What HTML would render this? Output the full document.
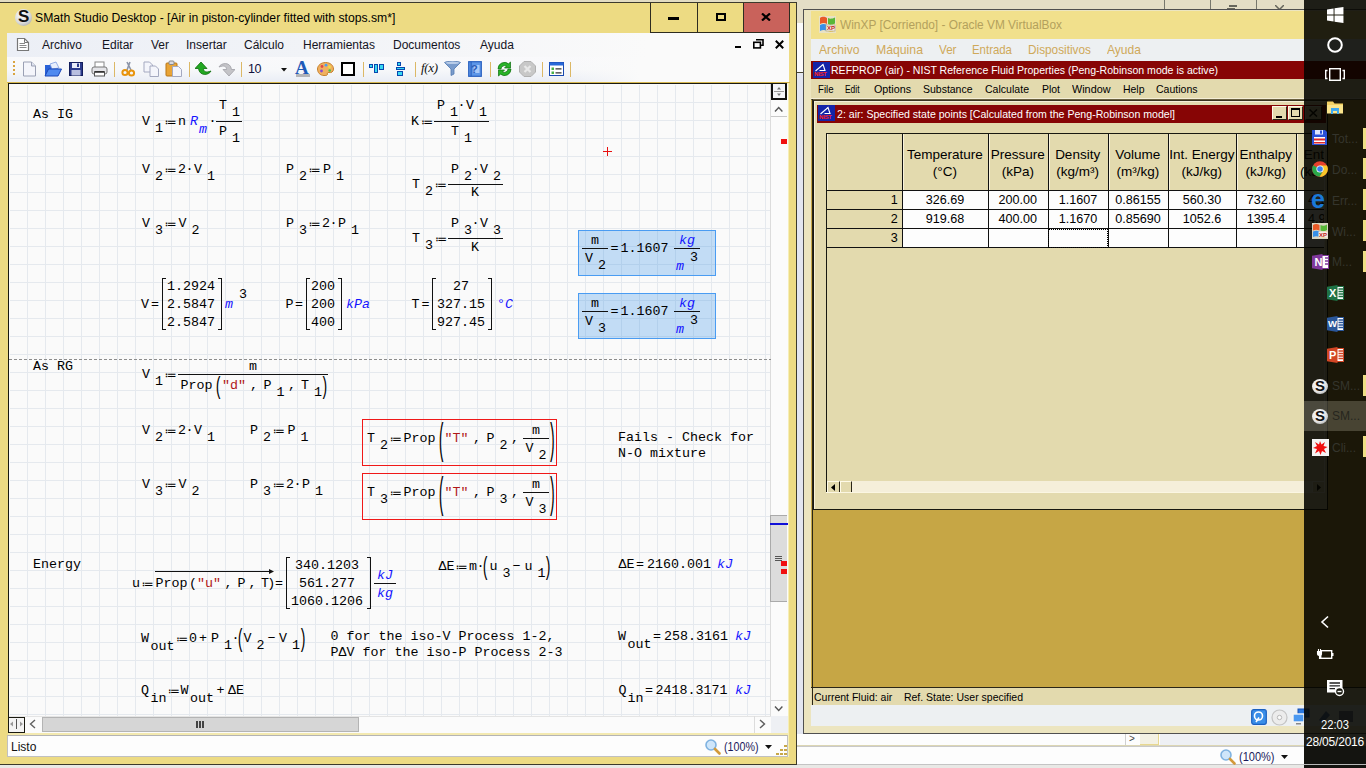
<!DOCTYPE html><html><head><meta charset="utf-8"><title>screen</title><style>
html,body{margin:0;padding:0}
body{width:1366px;height:768px;overflow:hidden;position:relative;background:#e6e2d6;font-family:"Liberation Sans",sans-serif}
div,span,svg{position:absolute;box-sizing:border-box}
span{white-space:pre;line-height:16px}
.m{font:13.33px "Liberation Mono",monospace;line-height:16px;color:#000}
.u{font-style:italic;color:#1414ff}
.s{color:#b01818}
.ui{font:12px "Liberation Sans",sans-serif;line-height:16px;color:#000}
.xp{font:11px "Liberation Sans",sans-serif;line-height:14px;color:#000}
.ar{font:13.5px "Liberation Sans",sans-serif;line-height:16px;color:#000}
.op{font:13.33px "DejaVu Sans",sans-serif;line-height:16px}
.tb{font:12px "Liberation Sans",sans-serif;line-height:16px;color:#35352d}
</style></head><body>
<div style="left:0px;top:0px;width:1366px;height:3px;background:#e2dcc2;"></div>
<div style="left:797px;top:0px;width:570px;height:10px;background:#e4dec6;"></div>
<div style="left:1164px;top:0px;width:1px;height:10px;background:#77776c;"></div>
<div style="left:1210px;top:0px;width:1px;height:10px;background:#77776c;"></div>
<div style="left:1256px;top:0px;width:1px;height:10px;background:#77776c;"></div>
<div style="left:1229px;top:5px;width:8px;height:2px;background:#66665c;"></div>
<div style="left:1227px;top:8px;width:8px;height:1px;background:#66665c;"></div>
<svg style="left:1275px;top:5px" width="9" height="5"><path d="M0 0L4.500 4.500L9 0" fill="none" stroke="#66665c" stroke-width="1.500"/></svg>
<div style="left:797px;top:0px;width:6px;height:23px;background:#e4dec6;"></div>
<div style="left:797px;top:23px;width:6px;height:50px;background:#fbfbfb;"></div>
<div style="left:797px;top:72px;width:6px;height:1px;background:#4a4630;"></div>
<div style="left:797px;top:73px;width:6px;height:661px;background:#e3e6f0;"></div>
<div style="left:797px;top:734px;width:507px;height:11px;background:#fdfdfd;"></div>
<div style="left:1125px;top:734px;width:15px;height:11px;background:#fdfdfd;border-left:1px solid #d0d0d0;"></div>
<div style="left:1140px;top:734px;width:19px;height:11px;background:#f3f1e4;border-right:1px solid #e8d890;border-bottom:1px solid #e8d890;"></div>
<div style="left:1160px;top:734px;width:144px;height:11px;background:#eef0f4;"></div>
<div style="left:797px;top:745px;width:507px;height:1px;background:#dcd6b4;"></div>
<div style="left:797px;top:746px;width:507px;height:19px;background:#fdfdfd;border-top:1px solid #c9c9c9;border-bottom:1px solid #c4c4c4;"></div>
<div style="left:0px;top:765px;width:1366px;height:3px;background:#e9e9e6;"></div>
<span class="ui" style="left:1129px;top:731px;font-size:10px;color:#444;">&gt;</span>
<svg style="left:1219px;top:748px" width="18" height="18" viewBox="0 0 18 18"><circle cx="7" cy="7" r="5" fill="#cfe6fa" stroke="#7fb2e0" stroke-width="1.6"/><line x1="11" y1="11" x2="15.5" y2="15.5" stroke="#d39a3a" stroke-width="2.6" stroke-linecap="round"/></svg>
<span class="ui" style="left:1239px;top:749px;font-size:12px;transform:scaleX(0.9178);transform-origin:0 0;color:#1a1a5a;">(100%)</span>
<svg style="left:1281px;top:755px" width="8" height="5"><path d="M0 0H7L3.5 4Z" fill="#111"/></svg>
<div style="left:-1px;top:2px;width:798px;height:763px;background:#eddb83;border:1px solid #3c3a2c;"></div>
<div style="left:15px;top:9px;width:17px;height:17px;border-radius:50%;background:radial-gradient(circle at 40% 35%,#ffffff 0%,#d9d9d9 55%,#8f8f8f 100%);"></div>
<span class="ui" style="left:18px;top:7px;font:bold 17px 'Liberation Sans',sans-serif;line-height:20px;color:#111;">S</span>
<span class="ui" style="left:35px;top:10px;font-size:12.2px;color:#000;">SMath Studio Desktop - [Air in piston-cylinder fitted with stops.sm*]</span>
<div style="left:744px;top:3px;width:46px;height:29px;background:#c9625b;"></div>
<div style="left:650px;top:3px;width:1px;height:30px;background:#2e2c20;"></div>
<div style="left:697px;top:3px;width:1px;height:30px;background:#2e2c20;"></div>
<div style="left:743px;top:3px;width:1px;height:30px;background:#2e2c20;"></div>
<div style="left:789px;top:3px;width:1px;height:30px;background:#2e2c20;"></div>
<div style="left:650px;top:32px;width:140px;height:1px;background:#2e2c20;"></div>
<div style="left:668px;top:17px;width:11px;height:3px;background:#000;"></div>
<div style="left:716px;top:13px;width:10px;height:8px;border:2px solid #000;"></div>
<svg style="left:761px;top:13px" width="10" height="8" viewBox="0 0 10 8"><path d="M1 0.5L9 7.5M9 0.5L1 7.5" stroke="#000" stroke-width="2.2"/></svg>
<div style="left:7px;top:33px;width:782px;height:24px;background:linear-gradient(90deg,#eceff6 0,#f1f3f7 300px,#fafafa 640px);"></div>
<div style="left:7px;top:57px;width:782px;height:25px;background:linear-gradient(180deg,#f9f9fb 0,#f7f8fa 50%,#e9edf5 100%);"></div>
<div style="left:560px;top:57px;width:229px;height:25px;background:linear-gradient(90deg,rgba(250,250,250,0),#fafafa 80px);"></div>
<svg style="left:16px;top:37px" width="14" height="15" viewBox="0 0 14 15"><path d="M1.5 1.5H8.5L12.5 5.5V13.5H1.5Z" fill="#fff" stroke="#777" stroke-width="1.2"/><path d="M8.5 1.5V5.5H12.5" fill="none" stroke="#777" stroke-width="1"/><path d="M3.5 6.5H9M3.5 8.5H10.5M3.5 10.5H10.5" stroke="#888" stroke-width="1"/></svg>
<span class="ui" style="left:42px;top:37px;color:#14141e;">Archivo</span>
<span class="ui" style="left:102px;top:37px;color:#14141e;">Editar</span>
<span class="ui" style="left:151px;top:37px;color:#14141e;">Ver</span>
<span class="ui" style="left:186px;top:37px;color:#14141e;">Insertar</span>
<span class="ui" style="left:244px;top:37px;color:#14141e;">Cálculo</span>
<span class="ui" style="left:303px;top:37px;color:#14141e;">Herramientas</span>
<span class="ui" style="left:393px;top:37px;color:#14141e;">Documentos</span>
<span class="ui" style="left:480px;top:37px;color:#14141e;">Ayuda</span>
<div style="left:735px;top:46px;width:6px;height:2px;background:#000;"></div>
<svg style="left:753px;top:39px" width="11" height="10" viewBox="0 0 11 10"><path d="M3 0.8H10V6.2H8" fill="none" stroke="#000" stroke-width="1.6"/><rect x="0.8" y="3.3" width="6.6" height="5.6" fill="none" stroke="#000" stroke-width="1.6"/></svg>
<svg style="left:775px;top:40px" width="9" height="9" viewBox="0 0 9 9"><path d="M0.8 0.8L8.2 8.2M8.2 0.8L0.8 8.2" stroke="#000" stroke-width="2"/></svg>
<div style="left:13px;top:61px;width:2px;height:2px;background:#d9a441;"></div>
<div style="left:13px;top:65px;width:2px;height:2px;background:#d9a441;"></div>
<div style="left:13px;top:69px;width:2px;height:2px;background:#d9a441;"></div>
<div style="left:13px;top:73px;width:2px;height:2px;background:#d9a441;"></div>
<div style="left:114px;top:62px;width:1px;height:15px;background:#dcb866;"></div>
<div style="left:189px;top:62px;width:1px;height:15px;background:#dcb866;"></div>
<div style="left:241px;top:62px;width:1px;height:15px;background:#dcb866;"></div>
<div style="left:363px;top:62px;width:1px;height:15px;background:#dcb866;"></div>
<div style="left:415px;top:62px;width:1px;height:15px;background:#dcb866;"></div>
<div style="left:490px;top:62px;width:1px;height:15px;background:#dcb866;"></div>
<div style="left:542px;top:62px;width:1px;height:15px;background:#dcb866;"></div>
<div style="left:570px;top:62px;width:1px;height:15px;background:#dcb866;"></div>
<svg style="left:22px;top:61px" width="15" height="16" viewBox="0 0 15 16"><path d="M1.5 1H9.5L13.5 5V15H1.5Z" fill="#f4f5fb" stroke="#9aa0b4" stroke-width="1"/><path d="M9.5 1V5H13.5" fill="#dfe3f0" stroke="#9aa0b4" stroke-width="1"/></svg>
<svg style="left:44px;top:61px" width="18" height="16" viewBox="0 0 18 16"><path d="M1 4H7L8 6H14V15H1Z" fill="#2a62d8"/><path d="M6 3L12 1L15 7L8 8Z" fill="#e8eefc" stroke="#7c9be0" stroke-width=".8"/><path d="M1 15L4.5 8H17.5L14 15Z" fill="#4f8af0" stroke="#1a46b8" stroke-width="1"/></svg>
<svg style="left:69px;top:62px" width="14" height="14" viewBox="0 0 14 14"><rect x=".5" y=".5" width="13" height="13" fill="#2b3a8c" stroke="#141e5c"/><rect x="3" y="1" width="8" height="5" fill="#e9ecf8"/><rect x="8" y="1.5" width="2" height="3.5" fill="#2b3a8c"/><rect x="2.5" y="8" width="9" height="5.5" fill="#b8bfe0"/></svg>
<svg style="left:91px;top:61px" width="17" height="16" viewBox="0 0 17 16"><rect x="4" y="1" width="9" height="6" fill="#fff" stroke="#888"/><rect x="1" y="6" width="15" height="7" rx="2" fill="#e4e4e8" stroke="#777"/><rect x="3.5" y="11" width="10" height="4" fill="#fff" stroke="#555"/><rect x="3.5" y="10" width="10" height="1.6" fill="#333"/></svg>
<svg style="left:121px;top:61px" width="15" height="16" viewBox="0 0 15 16"><path d="M9 1L6 9M6 1L10 9" stroke="#8d95a8" stroke-width="1.6" fill="none"/><circle cx="4" cy="11.5" r="2.6" fill="none" stroke="#e8940e" stroke-width="2"/><circle cx="10.5" cy="12" r="2.6" fill="none" stroke="#e8940e" stroke-width="2"/></svg>
<svg style="left:143px;top:61px" width="17" height="16" viewBox="0 0 17 16"><path d="M1 1H6.5L9.5 4V11H1Z" fill="#f4f5fb" stroke="#a4a9c0"/><path d="M7 5H12.5L15.5 8V15.5H7Z" fill="#f4f5fb" stroke="#a4a9c0"/></svg>
<svg style="left:165px;top:60px" width="18" height="17" viewBox="0 0 18 17"><rect x="1" y="3" width="11" height="13" rx="1" fill="#e9a436" stroke="#b97716"/><rect x="4" y="1" width="5" height="3.5" rx="1" fill="#d8d8e0" stroke="#888"/><path d="M7.5 6.5H13.5L16.5 9.5V16.5H7.5Z" fill="#f4f5fb" stroke="#a4a9c0"/></svg>
<svg style="left:195px;top:62px" width="17" height="14" viewBox="0 0 17 14"><path d="M6 0L12 6.5H8.5C8.5 9.5 10.5 11 16 9C14 13.5 4.5 14.5 3.5 6.5H0Z" fill="#22a822" stroke="#0c6c0c" stroke-width=".8"/></svg>
<svg style="left:218px;top:62px" width="17" height="14" viewBox="0 0 17 14"><path d="M11 14L5 7.5H8.5C8.5 4.5 6.5 3 1 5C3 0.5 12.500 -0.5 13.5 7.5H17Z" fill="#c4c4c8" stroke="#a0a0a6" stroke-width=".8"/></svg>
<span class="ui" style="left:248px;top:61px;color:#10103c;font-size:12.5px;letter-spacing:-0.4px">10</span>
<svg style="left:281px;top:68px" width="6" height="4" viewBox="0 0 6 4"><path d="M0 0H6L3 3.5Z" fill="#111"/></svg>
<span style="left:295px;top:58px;font:bold 19px 'Liberation Serif',serif;line-height:20px;color:#1e5ab8;">A</span>
<div style="left:296px;top:74px;width:14px;height:3px;background:#b4b4b8;"></div>
<svg style="left:317px;top:62px" width="17" height="14" viewBox="0 0 17 14"><path d="M8.500 .5C13.500 .5 16.500 3.500 16.500 7C16.500 10 14 11 12 10.500C10.500 10.100 10 11.500 10.500 12.500C10 13.500 8.500 13.500 7 13.500C3 13.500 .5 10.500 .5 7C.5 3.500 4 .5 8.500 .5Z" fill="#f0b060" stroke="#c07820" stroke-width=".9"/><circle cx="5" cy="4.500" r="1.400" fill="#e04848"/><circle cx="9" cy="3.200" r="1.400" fill="#4aa0f0"/><circle cx="12.500" cy="5" r="1.400" fill="#f0e040"/><circle cx="4.500" cy="9" r="1.400" fill="#8848d0"/><circle cx="12.700" cy="8.500" r="1.300" fill="#48c048"/></svg>
<div style="left:341px;top:62px;width:14px;height:14px;background:#fff;border:2px solid #000;"></div>
<svg style="left:369px;top:64px" width="15" height="9" viewBox="0 0 15 9"><rect x=".5" y=".5" width="3" height="3" fill="#38d8f0" stroke="#0848b0"/><rect x="5.500" y=".5" width="3" height="8" fill="#38d8f0" stroke="#0848b0"/><rect x="10.500" y=".5" width="4" height="5" fill="#38d8f0" stroke="#0848b0"/></svg>
<svg style="left:396px;top:62px" width="9" height="14" viewBox="0 0 9 14"><rect x="1.500" y=".5" width="3" height="3" fill="#38d8f0" stroke="#0848b0"/><rect x=".5" y="5.500" width="8" height="2" fill="#38d8f0" stroke="#0848b0"/><rect x="1.500" y="9.500" width="5" height="4" fill="#38d8f0" stroke="#0848b0"/></svg>
<span style="left:421px;top:60px;font:italic 13px 'Liberation Serif',serif;line-height:16px;color:#111;letter-spacing:-0.3px">f(x)</span>
<svg style="left:444px;top:61px" width="17" height="15" viewBox="0 0 17 15"><path d="M.5 1.500C3 -.2 14 -.2 16.500 1.500L10 8V13L7 14.500V8Z" fill="#7a9ccc" stroke="#5078b0" stroke-width=".8"/><ellipse cx="8.500" cy="1.800" rx="7" ry="1.300" fill="#b8cce8"/></svg>
<svg style="left:468px;top:61px" width="14" height="16" viewBox="0 0 14 16"><rect x=".7" y=".7" width="12.600" height="14.600" fill="#5c96e8" stroke="#2860c0" stroke-width="1.200"/><rect x="2.500" y=".7" width="1.200" height="14.600" fill="#2860c0"/><rect x="5.500" y="4" width="6" height="8" fill="#a8c8f8"/></svg>
<span class="ui" style="left:470px;top:62px;font:bold 11px 'Liberation Sans',sans-serif;line-height:14px;color:#2a5cb8;left:471px">?</span>
<svg style="left:496px;top:61px" width="17" height="16" viewBox="0 0 17 16"><path d="M8.500 1A6.500 6.500 0 0 1 15 7.500H12L15.500 11.500L17 7.500" fill="none"/><path d="M2 8A6.500 6.500 0 0 1 12.500 2.800L14.500 1V7H8.500L10.500 5A3.800 3.800 0 0 0 5 8Z" fill="#28b428" stroke="#0c6c0c" stroke-width=".7"/><path d="M15 8A6.500 6.500 0 0 1 4.500 13.200L2.500 15V9H8.500L6.500 11A3.800 3.800 0 0 0 12 8Z" fill="#28b428" stroke="#0c6c0c" stroke-width=".7"/></svg>
<svg style="left:519px;top:61px" width="17" height="16" viewBox="0 0 17 16"><path d="M5 .5H12L16.500 5V11L12 15.500H5L.5 11V5Z" fill="#c8c8c8" stroke="#b0b0b0"/><path d="M5.500 5L11.500 11M11.500 5L5.500 11" stroke="#e8e8e8" stroke-width="2.200"/></svg>
<svg style="left:549px;top:62px" width="15" height="14" viewBox="0 0 15 14"><rect x=".5" y=".5" width="14" height="13" fill="#fff" stroke="#1848b0"/><rect x=".5" y=".5" width="14" height="3" fill="#2868d8"/><rect x="2.500" y="5.500" width="2.500" height="2.500" fill="#48b048"/><rect x="2.500" y="9.500" width="2.500" height="2.500" fill="#48b048"/><path d="M6.500 6.800H12.500M6.500 10.800H12.500" stroke="#333" stroke-width="1.200"/></svg>
<div style="left:7px;top:82px;width:783px;height:1px;background:#d8b850;"></div>
<div style="left:8px;top:83px;width:780px;height:1px;background:#1a1a10;"></div>
<div style="left:8px;top:83px;width:1px;height:650px;background:#1a1a10;"></div>
<div style="left:9px;top:84px;width:762px;height:633px;background:#fafafa;"></div>
<div style="left:10px;top:85px;width:760px;height:632px;background-image:linear-gradient(90deg,#e5e9ee 1px,transparent 1px),linear-gradient(180deg,#e5e9ee 1px,transparent 1px);background-size:18px 18px;background-position:17px 17px;"></div>
<div style="left:787px;top:83px;width:2px;height:674px;background:#f6eeb6;"></div>
<div style="left:770px;top:84px;width:18px;height:633px;background:#fbfbfb;border-left:1px solid #dcdcdc;"></div>
<div style="left:771px;top:84px;width:16px;height:16px;background:#f4f5f8;border:2px solid #111;border-top:none;"></div>
<div style="left:774px;top:91px;width:10px;height:1px;background:#999;"></div>
<svg style="left:775px;top:86px" width="8" height="11" viewBox="0 0 8 11"><path d="M4 1L6 3.500H2ZM4 10L6 7.500H2Z" fill="#777"/></svg>
<svg style="left:774px;top:105px" width="10" height="8" viewBox="0 0 10 8"><path d="M1 6.500L4.700 2.500L8.400 6.500" fill="none" stroke="#555" stroke-width="1.400"/></svg>
<div style="left:771px;top:116px;width:16px;height:1px;background:#c8c8c8;"></div>
<div style="left:770px;top:515px;width:17px;height:87px;background:#dcdcdc;border:1px solid #aaa;border-right:none;"></div>
<div style="left:770px;top:523px;width:18px;height:2px;background:#1010d8;"></div>
<div style="left:775px;top:556px;width:7px;height:1px;background:#555;"></div>
<div style="left:775px;top:558px;width:7px;height:1px;background:#555;"></div>
<div style="left:775px;top:560px;width:7px;height:1px;background:#555;"></div>
<div style="left:781px;top:561px;width:6px;height:5px;background:#f01010;"></div>
<div style="left:781px;top:569px;width:6px;height:5px;background:#f01010;"></div>
<div style="left:781px;top:139px;width:6px;height:5px;background:#f01010;"></div>
<div style="left:771px;top:700px;width:16px;height:1px;background:#dcdcdc;"></div>
<svg style="left:774px;top:705px" width="10" height="8" viewBox="0 0 10 8"><path d="M1 1.500L4.700 5.500L8.400 1.500" fill="none" stroke="#555" stroke-width="1.400"/></svg>
<div style="left:9px;top:716px;width:779px;height:17px;background:#fbfbfb;border-top:1px solid #e4e4e4;"></div>
<div style="left:8px;top:717px;width:17px;height:16px;background:#f4f4f4;border:1px solid #1a1a10;"></div>
<div style="left:16px;top:719px;width:1px;height:10px;background:#555;"></div>
<svg style="left:10px;top:721px" width="13" height="6" viewBox="0 0 13 6"><path d="M0 3L3 .5V5.500ZM13 3L10 .5V5.500Z" fill="#999"/></svg>
<svg style="left:28px;top:719px" width="10" height="10" viewBox="0 0 10 10"><path d="M7 1L2.500 5L7 9" fill="none" stroke="#606060" stroke-width="1.400"/></svg>
<div style="left:42px;top:716.5px;width:317px;height:15.5px;background:#d6d6d6;border:1px solid #b4b4b4;"></div>
<div style="left:196px;top:721px;width:2px;height:7px;background:#444;"></div>
<div style="left:199px;top:721px;width:2px;height:7px;background:#444;"></div>
<div style="left:202px;top:721px;width:2px;height:7px;background:#444;"></div>
<div style="left:754px;top:716px;width:1px;height:17px;background:#dcdcdc;"></div>
<svg style="left:757px;top:719px" width="10" height="10" viewBox="0 0 10 10"><path d="M3 1L7.500 5L3 9" fill="none" stroke="#606060" stroke-width="1.400"/></svg>
<div style="left:771px;top:716px;width:17px;height:17px;background:#eef0f4;"></div>
<div style="left:7px;top:735px;width:781px;height:22px;background:#fdfdfd;border:1px solid #c0c0c0;border-top:1px solid #b4b4b4;"></div>
<div style="left:8px;top:733px;width:780px;height:2px;background:#f3e9b0;"></div>
<span class="ui" style="left:11px;top:739px;color:#111;font-size:12px;">Listo</span>
<svg style="left:704px;top:738px" width="18" height="18" viewBox="0 0 18 18"><circle cx="7" cy="7" r="5" fill="#cfe6fa" stroke="#7fb2e0" stroke-width="1.600"/><line x1="11" y1="11" x2="15.500" y2="15.500" stroke="#d39a3a" stroke-width="2.600" stroke-linecap="round"/></svg>
<span class="ui" style="left:724px;top:739px;font-size:12px;transform:scaleX(0.8919);transform-origin:0 0;color:#1a1a5a;">(100%)</span>
<svg style="left:765px;top:745px" width="7" height="4" viewBox="0 0 7 4"><path d="M0 0H7L3.500 4Z" fill="#111"/></svg>
<div style="left:784px;top:744.5px;width:2.5px;height:2.5px;background:#c8a848;"></div>
<div style="left:780px;top:748.5px;width:2.5px;height:2.5px;background:#c8a848;"></div>
<div style="left:784px;top:748.5px;width:2.5px;height:2.5px;background:#c8a848;"></div>
<div style="left:776px;top:752.5px;width:2.5px;height:2.5px;background:#c8a848;"></div>
<div style="left:780px;top:752.5px;width:2.5px;height:2.5px;background:#c8a848;"></div>
<div style="left:784px;top:752.5px;width:2.5px;height:2.5px;background:#c8a848;"></div>
<span class="m" style="left:33px;top:107px;">As IG</span>
<span class="m" style="left:142px;top:114px;">V</span>
<span class="m" style="left:155px;top:121px;">1</span>
<span class="op" style="left:164.7px;top:114px;font-size:12px;">≔</span>
<span class="m" style="left:178px;top:114px;">n</span>
<span class="m u" style="left:190px;top:114px;">R</span>
<span class="m u" style="left:199px;top:122px;">m</span>
<span class="m" style="left:208.5px;top:113.5px;">·</span>
<div style="left:216px;top:121px;width:26px;height:1px;background:#111;"></div>
<span class="m" style="left:219px;top:98px;">T</span>
<span class="m" style="left:232px;top:105px;">1</span>
<span class="m" style="left:219px;top:124px;">P</span>
<span class="m" style="left:232px;top:131px;">1</span>
<span class="m" style="left:142px;top:162px;">V</span>
<span class="m" style="left:155px;top:169px;">2</span>
<span class="op" style="left:164.7px;top:162px;font-size:12px;">≔</span>
<span class="m" style="left:178px;top:162px;">2</span>
<span class="m" style="left:185.5px;top:161.5px;">·</span>
<span class="m" style="left:194px;top:162px;">V</span>
<span class="m" style="left:207px;top:169px;">1</span>
<span class="m" style="left:286px;top:162px;">P</span>
<span class="m" style="left:299px;top:169px;">2</span>
<span class="op" style="left:308.7px;top:162px;font-size:12px;">≔</span>
<span class="m" style="left:323px;top:162px;">P</span>
<span class="m" style="left:336px;top:169px;">1</span>
<span class="m" style="left:411px;top:114px;">K</span>
<span class="op" style="left:421.2px;top:114px;font-size:12px;">≔</span>
<div style="left:434px;top:121px;width:55px;height:1px;background:#111;"></div>
<span class="m" style="left:437px;top:98px;">P</span>
<span class="m" style="left:450px;top:105px;">1</span>
<span class="m" style="left:457.6px;top:97.5px;">·</span>
<span class="m" style="left:466px;top:98px;">V</span>
<span class="m" style="left:479px;top:105px;">1</span>
<span class="m" style="left:451px;top:124px;">T</span>
<span class="m" style="left:464px;top:131px;">1</span>
<span class="m" style="left:412px;top:177px;">T</span>
<span class="m" style="left:425px;top:184px;">2</span>
<span class="op" style="left:435.0px;top:177px;font-size:12px;">≔</span>
<div style="left:448px;top:184px;width:55px;height:1px;background:#111;"></div>
<span class="m" style="left:451px;top:162px;">P</span>
<span class="m" style="left:464px;top:169px;">2</span>
<span class="m" style="left:471.7px;top:161.5px;">·</span>
<span class="m" style="left:480px;top:162px;">V</span>
<span class="m" style="left:493px;top:169px;">2</span>
<span class="m" style="left:471px;top:185px;">K</span>
<span class="m" style="left:142px;top:216px;">V</span>
<span class="m" style="left:155px;top:223px;">3</span>
<span class="op" style="left:164.7px;top:216px;font-size:12px;">≔</span>
<span class="m" style="left:178.5px;top:216px;">V</span>
<span class="m" style="left:191.5px;top:223px;">2</span>
<span class="m" style="left:286px;top:216px;">P</span>
<span class="m" style="left:299px;top:223px;">3</span>
<span class="op" style="left:308.7px;top:216px;font-size:12px;">≔</span>
<span class="m" style="left:322px;top:216px;">2</span>
<span class="m" style="left:329.5px;top:215.5px;">·</span>
<span class="m" style="left:338px;top:216px;">P</span>
<span class="m" style="left:351px;top:223px;">1</span>
<span class="m" style="left:412px;top:231px;">T</span>
<span class="m" style="left:425px;top:238px;">3</span>
<span class="op" style="left:435.2px;top:231px;font-size:12px;">≔</span>
<div style="left:448px;top:238px;width:55px;height:1px;background:#111;"></div>
<span class="m" style="left:451px;top:216px;">P</span>
<span class="m" style="left:464px;top:223px;">3</span>
<span class="m" style="left:471.6px;top:215.5px;">·</span>
<span class="m" style="left:480px;top:216px;">V</span>
<span class="m" style="left:493px;top:223px;">3</span>
<span class="m" style="left:471px;top:240px;">K</span>
<span class="m" style="left:141px;top:297px;">V</span>
<span class="m" style="left:151px;top:297px;">=</span>
<div style="left:162px;top:278px;width:4px;height:52px;border:1px solid #111;border-right:none;"></div>
<div style="left:218px;top:278px;width:4px;height:52px;border:1px solid #111;border-left:none;"></div>
<span class="m" style="left:167px;top:279px;">1.2924</span>
<span class="m" style="left:167px;top:297px;">2.5847</span>
<span class="m" style="left:167px;top:315px;">2.5847</span>
<span class="m u" style="left:225px;top:297px;">m</span>
<span class="m" style="left:239px;top:287px;">3</span>
<span class="m" style="left:285.5px;top:297px;">P</span>
<span class="m" style="left:295px;top:297px;">=</span>
<div style="left:306px;top:278px;width:4px;height:52px;border:1px solid #111;border-right:none;"></div>
<div style="left:338px;top:278px;width:4px;height:52px;border:1px solid #111;border-left:none;"></div>
<span class="m" style="left:311px;top:279px;">200</span>
<span class="m" style="left:311px;top:297px;">200</span>
<span class="m" style="left:311px;top:315px;">400</span>
<span class="m u" style="left:346px;top:297px;">kPa</span>
<span class="m" style="left:411.5px;top:297px;">T</span>
<span class="m" style="left:421.5px;top:297px;">=</span>
<div style="left:432px;top:278px;width:4px;height:52px;border:1px solid #111;border-right:none;"></div>
<div style="left:488px;top:278px;width:4px;height:52px;border:1px solid #111;border-left:none;"></div>
<span class="m" style="left:453px;top:279px;">27</span>
<span class="m" style="left:437px;top:297px;">327.15</span>
<span class="m" style="left:437px;top:315px;">927.45</span>
<span class="m u" style="left:497px;top:297px;">°C</span>
<div style="left:578px;top:230px;width:138px;height:46px;background:rgba(51,143,235,.28);border:1px solid #4a9cf2;"></div>
<div style="left:582px;top:248px;width:26px;height:1px;background:#111;"></div>
<span class="m" style="left:591px;top:233px;">m</span>
<span class="m" style="left:585px;top:251px;">V</span>
<span class="m" style="left:598px;top:258px;">2</span>
<span class="m" style="left:610.5px;top:241px;">=</span>
<span class="m" style="left:620.6px;top:241px;">1.1607</span>
<div style="left:674px;top:248px;width:26px;height:1px;background:#111;"></div>
<span class="m u" style="left:679px;top:233px;">kg</span>
<span class="m u" style="left:676px;top:259px;">m</span>
<span class="m" style="left:690px;top:250px;">3</span>
<div style="left:578px;top:293px;width:138px;height:46px;background:rgba(51,143,235,.28);border:1px solid #4a9cf2;"></div>
<div style="left:582px;top:311px;width:26px;height:1px;background:#111;"></div>
<span class="m" style="left:591px;top:296px;">m</span>
<span class="m" style="left:585px;top:314px;">V</span>
<span class="m" style="left:598px;top:321px;">3</span>
<span class="m" style="left:610.5px;top:304px;">=</span>
<span class="m" style="left:620.6px;top:304px;">1.1607</span>
<div style="left:674px;top:311px;width:26px;height:1px;background:#111;"></div>
<span class="m u" style="left:679px;top:296px;">kg</span>
<span class="m u" style="left:676px;top:322px;">m</span>
<span class="m" style="left:690px;top:313px;">3</span>
<div style="left:603px;top:151px;width:9px;height:1px;background:#e81010;"></div>
<div style="left:607px;top:147px;width:1px;height:9px;background:#e81010;"></div>
<div style="left:9px;top:359px;width:762px;height:1px;background:repeating-linear-gradient(90deg,#8c8c8c 0 3px,transparent 3px 5px);"></div>
<span class="m" style="left:33px;top:359px;">As RG</span>
<span class="m" style="left:142px;top:367px;">V</span>
<span class="m" style="left:155px;top:374px;">1</span>
<span class="op" style="left:164.7px;top:367px;font-size:12px;">≔</span>
<div style="left:178px;top:374px;width:150px;height:1px;background:#111;"></div>
<span class="m" style="left:249px;top:359px;">m</span>
<span class="m" style="left:180.5px;top:378px;">Prop</span>
<span class="m" style="left:214.6px;top:373.6px;transform:scale(1,1.800);transform-origin:0 0;">(</span>
<span class="m s" style="left:222px;top:378px;">"d"</span>
<span class="m" style="left:250px;top:378px;">,</span>
<span class="m" style="left:263.5px;top:378px;">P</span>
<span class="m" style="left:276.5px;top:385px;">1</span>
<span class="m" style="left:288px;top:378px;">,</span>
<span class="m" style="left:301px;top:378px;">T</span>
<span class="m" style="left:314px;top:385px;">1</span>
<span class="m" style="left:320.6px;top:373.6px;transform:scale(1,1.800);transform-origin:0 0;">)</span>
<span class="m" style="left:142px;top:423px;">V</span>
<span class="m" style="left:155px;top:430px;">2</span>
<span class="op" style="left:164.7px;top:423px;font-size:12px;">≔</span>
<span class="m" style="left:178px;top:423px;">2</span>
<span class="m" style="left:185.5px;top:422.5px;">·</span>
<span class="m" style="left:194px;top:423px;">V</span>
<span class="m" style="left:207px;top:430px;">1</span>
<span class="m" style="left:250px;top:423px;">P</span>
<span class="m" style="left:263px;top:430px;">2</span>
<span class="op" style="left:272.9px;top:423px;font-size:12px;">≔</span>
<span class="m" style="left:287.5px;top:423px;">P</span>
<span class="m" style="left:300.5px;top:430px;">1</span>
<div style="left:362px;top:419px;width:195px;height:47px;border:1px solid #f01818;"></div>
<span class="m" style="left:367px;top:431px;">T</span>
<span class="m" style="left:380px;top:438px;">2</span>
<span class="op" style="left:390.0px;top:431px;font-size:12px;">≔</span>
<span class="m" style="left:403.5px;top:431px;">Prop</span>
<span class="m" style="left:437.6px;top:416.7px;transform:scale(1,3.250);transform-origin:0 0;">(</span>
<span class="m s" style="left:444.5px;top:431px;">"T"</span>
<span class="m" style="left:473px;top:431px;">,</span>
<span class="m" style="left:486.5px;top:431px;">P</span>
<span class="m" style="left:499.5px;top:438px;">2</span>
<span class="m" style="left:511px;top:431px;">,</span>
<div style="left:523px;top:438px;width:26px;height:1px;background:#111;"></div>
<span class="m" style="left:532px;top:423px;">m</span>
<span class="m" style="left:525.5px;top:441px;">V</span>
<span class="m" style="left:538.5px;top:448px;">2</span>
<span class="m" style="left:548px;top:416.7px;transform:scale(1,3.250);transform-origin:0 0;">)</span>
<div style="left:362px;top:473px;width:195px;height:47px;border:1px solid #f01818;"></div>
<span class="m" style="left:367px;top:485px;">T</span>
<span class="m" style="left:380px;top:492px;">3</span>
<span class="op" style="left:390.0px;top:485px;font-size:12px;">≔</span>
<span class="m" style="left:403.5px;top:485px;">Prop</span>
<span class="m" style="left:437.6px;top:470.7px;transform:scale(1,3.250);transform-origin:0 0;">(</span>
<span class="m s" style="left:444.5px;top:485px;">"T"</span>
<span class="m" style="left:473px;top:485px;">,</span>
<span class="m" style="left:486.5px;top:485px;">P</span>
<span class="m" style="left:499.5px;top:492px;">3</span>
<span class="m" style="left:511px;top:485px;">,</span>
<div style="left:523px;top:492px;width:26px;height:1px;background:#111;"></div>
<span class="m" style="left:532px;top:477px;">m</span>
<span class="m" style="left:525.5px;top:495px;">V</span>
<span class="m" style="left:538.5px;top:502px;">3</span>
<span class="m" style="left:548px;top:470.7px;transform:scale(1,3.250);transform-origin:0 0;">)</span>
<span class="m" style="left:142px;top:477px;">V</span>
<span class="m" style="left:155px;top:484px;">3</span>
<span class="op" style="left:164.7px;top:477px;font-size:12px;">≔</span>
<span class="m" style="left:178.5px;top:477px;">V</span>
<span class="m" style="left:191.5px;top:484px;">2</span>
<span class="m" style="left:250px;top:477px;">P</span>
<span class="m" style="left:263px;top:484px;">3</span>
<span class="op" style="left:272.9px;top:477px;font-size:12px;">≔</span>
<span class="m" style="left:286px;top:477px;">2</span>
<span class="m" style="left:293.5px;top:476.5px;">·</span>
<span class="m" style="left:302px;top:477px;">P</span>
<span class="m" style="left:315px;top:484px;">1</span>
<span class="m" style="left:618px;top:430px;">Fails - Check for</span>
<span class="m" style="left:618px;top:446px;">N-O mixture</span>
<span class="m" style="left:33px;top:557px;">Energy</span>
<span class="m" style="left:132px;top:576px;">u</span>
<span class="op" style="left:141.7px;top:576px;font-size:12px;">≔</span>
<div style="left:155px;top:571px;width:118px;height:1px;background:#111;"></div>
<svg style="left:268px;top:568px" width="7" height="7"><path d="M1 1L6 3.500L1 6Z" fill="#111"/></svg>
<span class="m" style="left:155.5px;top:576px;">Prop</span>
<span class="m" style="left:189px;top:576px;">(</span>
<span class="m s" style="left:197px;top:576px;">"u"</span>
<span class="m" style="left:224.5px;top:576px;">,</span>
<span class="m" style="left:237.5px;top:576px;">P</span>
<span class="m" style="left:248.5px;top:576px;">,</span>
<span class="m" style="left:261px;top:576px;">T</span>
<span class="m" style="left:267.3px;top:576px;">)</span>
<span class="m" style="left:275px;top:576px;">=</span>
<div style="left:286px;top:557px;width:4px;height:52px;border:1px solid #111;border-right:none;"></div>
<div style="left:367px;top:557px;width:4px;height:52px;border:1px solid #111;border-left:none;"></div>
<span class="m" style="left:295px;top:558px;">340.1203</span>
<span class="m" style="left:299px;top:576px;">561.277</span>
<span class="m" style="left:291px;top:594px;">1060.1206</span>
<div style="left:374px;top:583px;width:22px;height:1px;background:#111;"></div>
<span class="m u" style="left:377px;top:568px;">kJ</span>
<span class="m u" style="left:377px;top:586px;">kg</span>
<span class="m" style="left:438.5px;top:559px;">Δ</span>
<span class="m" style="left:446.5px;top:559px;">E</span>
<span class="op" style="left:455.7px;top:559px;font-size:12px;">≔</span>
<span class="m" style="left:469px;top:559px;">m</span>
<span class="m" style="left:476.5px;top:558.5px;">·</span>
<span class="m" style="left:481.6px;top:554.4px;transform:scale(1,1.917);transform-origin:0 0;">(</span>
<span class="m" style="left:489.5px;top:559px;">u</span>
<span class="m" style="left:502.5px;top:566px;">3</span>
<span class="m" style="left:512.5px;top:559px;">−</span>
<span class="m" style="left:524.5px;top:559px;">u</span>
<span class="m" style="left:537.5px;top:566px;">1</span>
<span class="m" style="left:543.7px;top:554.4px;transform:scale(1,1.917);transform-origin:0 0;">)</span>
<span class="m" style="left:618.5px;top:557px;">Δ</span>
<span class="m" style="left:626.5px;top:557px;">E</span>
<span class="m" style="left:636px;top:557px;">=</span>
<span class="m" style="left:647px;top:557px;">2160.001</span>
<span class="m u" style="left:717px;top:557px;">kJ</span>
<span class="m" style="left:141px;top:631px;">W</span>
<span class="m" style="left:150.5px;top:639px;">out</span>
<span class="op" style="left:176.2px;top:631px;font-size:12px;">≔</span>
<span class="m" style="left:189px;top:631px;">0</span>
<span class="m" style="left:199px;top:631px;">+</span>
<span class="m" style="left:211px;top:631px;">P</span>
<span class="m" style="left:224px;top:638px;">1</span>
<span class="m" style="left:231.5px;top:630.5px;">·</span>
<span class="m" style="left:236.5px;top:626.4px;transform:scale(1,1.917);transform-origin:0 0;">(</span>
<span class="m" style="left:243.5px;top:631px;">V</span>
<span class="m" style="left:256.5px;top:638px;">2</span>
<span class="m" style="left:267.5px;top:631px;">−</span>
<span class="m" style="left:279px;top:631px;">V</span>
<span class="m" style="left:292px;top:638px;">1</span>
<span class="m" style="left:298.7px;top:626.4px;transform:scale(1,1.917);transform-origin:0 0;">)</span>
<span class="m" style="left:330.5px;top:629px;">0 for the iso-V Process 1-2,</span>
<span class="m" style="left:330.5px;top:645px;">PΔV for the iso-P Process 2-3</span>
<span class="m" style="left:618px;top:629px;">W</span>
<span class="m" style="left:627.5px;top:637px;">out</span>
<span class="m" style="left:653px;top:629px;">=</span>
<span class="m" style="left:664px;top:629px;">258.3161</span>
<span class="m u" style="left:735px;top:629px;">kJ</span>
<span class="m" style="left:141px;top:683px;">Q</span>
<span class="m" style="left:150.5px;top:691px;">in</span>
<span class="op" style="left:167.9px;top:683px;font-size:12px;">≔</span>
<span class="m" style="left:180.5px;top:683px;">W</span>
<span class="m" style="left:190px;top:691px;">out</span>
<span class="m" style="left:216.5px;top:683px;">+</span>
<span class="m" style="left:228px;top:683px;">Δ</span>
<span class="m" style="left:236px;top:683px;">E</span>
<span class="m" style="left:618.5px;top:683px;">Q</span>
<span class="m" style="left:627.5px;top:691px;">in</span>
<span class="m" style="left:645px;top:683px;">=</span>
<span class="m" style="left:655.5px;top:683px;">2418.3171</span>
<span class="m u" style="left:735px;top:683px;">kJ</span>
<div style="left:803px;top:9px;width:620px;height:725px;background:#ece5c0;border:1px solid #505050;"></div>
<div style="left:811px;top:11px;width:620px;height:28px;background:#f1e08c;"></div>
<svg style="left:819px;top:16px" width="17" height="17" viewBox="0 0 17 17"><rect x="0" y="0" width="17" height="17" fill="#e9e2c4"/><path d="M1 2C4 0 6 1 8 2V8C6 7 4 6.500 1 8Z" fill="#e85a28"/><path d="M9 2C11 3 13 3 16 1.500V7.500C13 9 11 9 9 8Z" fill="#58b838"/><path d="M1 9C4 7.500 6 8 8 9V15C6 14 4 13.500 1 15Z" fill="#3890e8"/><path d="M9 9C11 10 13 10 16 8.500V14.500C13 16 11 16 9 15Z" fill="#f0c030"/><rect x="7" y="9" width="9" height="6" fill="#f4f0e4" stroke="#a89c78" stroke-width=".6"/></svg>
<span style="left:827px;top:25px;font:bold 6px 'Liberation Sans',sans-serif;line-height:7px;color:#c02020;">XP</span>
<span class="ui" style="left:840px;top:17px;font-size:12.5px;transform:scaleX(0.9502);transform-origin:0 0;color:#b3a05c;">WinXP [Corriendo] - Oracle VM VirtualBox</span>
<div style="left:811px;top:39px;width:620px;height:22px;background:#edf0f2;"></div>
<span class="ui" style="left:819px;top:42px;font-size:12.2px;transform:scaleX(0.9956);transform-origin:0 0;color:#cfa95a;">Archivo</span>
<span class="ui" style="left:876px;top:42px;font-size:12.2px;transform:scaleX(1.0044);transform-origin:0 0;color:#cfa95a;">Máquina</span>
<span class="ui" style="left:939px;top:42px;font-size:12.2px;transform:scaleX(0.9557);transform-origin:0 0;color:#cfa95a;">Ver</span>
<span class="ui" style="left:972px;top:42px;font-size:12.2px;transform:scaleX(0.9362);transform-origin:0 0;color:#cfa95a;">Entrada</span>
<span class="ui" style="left:1028px;top:42px;font-size:12.2px;transform:scaleX(0.9680);transform-origin:0 0;color:#cfa95a;">Dispositivos</span>
<span class="ui" style="left:1107px;top:42px;font-size:12.2px;transform:scaleX(0.9892);transform-origin:0 0;color:#cfa95a;">Ayuda</span>
<div style="left:811px;top:61px;width:620px;height:18px;background:#870505;"></div>
<svg style="left:813px;top:62px" width="17" height="16" viewBox="0 0 17 16"><rect width="17" height="16" fill="#1424a8"/><path d="M2.500 9L10 2.500L12 8.500H6.500M10 2.500L8 4.200" fill="none" stroke="#fff" stroke-width="1.100"/></svg>
<span style="left:814px;top:71px;font:bold 6px 'Liberation Sans',sans-serif;line-height:7px;color:#ff2020;letter-spacing:-0.3px;">NIST</span>
<span class="xp" style="left:831px;top:63px;font-size:11.5px;transform:scaleX(0.9170);transform-origin:0 0;color:#fff;">REFPROP (air) - NIST Reference Fluid Properties (Peng-Robinson mode is active)</span>
<div style="left:811px;top:79px;width:620px;height:20px;background:#e3daae;"></div>
<span class="xp" style="left:817.5px;top:82px;font-size:11.5px;transform:scaleX(0.8365);transform-origin:0 0;">File</span>
<span class="xp" style="left:845px;top:82px;font-size:11.5px;transform:scaleX(0.7317);transform-origin:0 0;">Edit</span>
<span class="xp" style="left:874px;top:82px;font-size:11.5px;transform:scaleX(0.9336);transform-origin:0 0;">Options</span>
<span class="xp" style="left:922.5px;top:82px;font-size:11.5px;transform:scaleX(0.9109);transform-origin:0 0;">Substance</span>
<span class="xp" style="left:985px;top:82px;font-size:11.5px;transform:scaleX(0.9178);transform-origin:0 0;">Calculate</span>
<span class="xp" style="left:1041.5px;top:82px;font-size:11.5px;transform:scaleX(0.9084);transform-origin:0 0;">Plot</span>
<span class="xp" style="left:1071.5px;top:82px;font-size:11.5px;transform:scaleX(0.9413);transform-origin:0 0;">Window</span>
<span class="xp" style="left:1122.5px;top:82px;font-size:11.5px;transform:scaleX(0.9091);transform-origin:0 0;">Help</span>
<span class="xp" style="left:1156px;top:82px;font-size:11.5px;transform:scaleX(0.9144);transform-origin:0 0;">Cautions</span>
<div style="left:811px;top:98px;width:620px;height:590px;background:#c6a645;"></div>
<div style="left:811px;top:98px;width:620px;height:1px;background:#f4eed6;"></div>
<div style="left:811px;top:99px;width:620px;height:1px;background:#6a6040;"></div>
<div style="left:812px;top:99px;width:1px;height:590px;background:#2a2618;"></div>
<div style="left:813px;top:100px;width:515px;height:410px;background:#e3daae;border:1px solid #181810;border-top-color:#3a3420;"></div>
<div style="left:814px;top:101px;width:513px;height:1px;background:#f6f0d8;"></div>
<div style="left:814px;top:101px;width:1px;height:408px;background:#f6f0d8;"></div>
<div style="left:817px;top:105px;width:509px;height:18px;background:#870505;"></div>
<svg style="left:818px;top:105px" width="17" height="16" viewBox="0 0 17 16"><rect width="17" height="16" fill="#1424a8"/><path d="M2.500 9L10 2.500L12 8.500H6.500M10 2.500L8 4.200" fill="none" stroke="#fff" stroke-width="1.100"/></svg>
<span style="left:819px;top:114px;font:bold 6px 'Liberation Sans',sans-serif;line-height:7px;color:#ff2020;letter-spacing:-0.3px;">NIST</span>
<span class="xp" style="left:836.5px;top:107px;font-size:11.5px;transform:scaleX(0.9196);transform-origin:0 0;color:#fff;">2: air: Specified state points [Calculated from the Peng-Robinson model]</span>
<div style="left:1272px;top:106px;width:15px;height:14px;background:#e3daae;border:1px solid;border-color:#fffbe8 #2a2618 #2a2618 #fffbe8;"></div>
<div style="left:1276px;top:116px;width:6px;height:2px;background:#000;"></div>
<div style="left:1288px;top:106px;width:15px;height:14px;background:#e3daae;border:1px solid;border-color:#fffbe8 #2a2618 #2a2618 #fffbe8;"></div>
<div style="left:1291px;top:108px;width:9px;height:9px;border:1px solid #000;border-top-width:2px;"></div>
<div style="left:1305px;top:106px;width:17px;height:14px;background:#e3daae;border:1px solid;border-color:#fffbe8 #2a2618 #2a2618 #fffbe8;"></div>
<svg style="left:1309px;top:109px" width="9" height="8" viewBox="0 0 9 8"><path d="M.5 .5L8 7.500M8 .5L.5 7.500" stroke="#000" stroke-width="1.500"/></svg>
<div style="left:826px;top:133px;width:498px;height:359px;overflow:hidden;background:#e3daae;border-left:1px solid #181810;border-top:1px solid #181810;">
<div style="left:74.8px;top:55.8px;width:456.40000000000003px;height:57.2px;background:#fdfdfd"></div>
<span class="ar" style="left:0px;top:58.3px;width:70.8px;text-align:right;font-size:13.4px;transform:scaleX(.94);transform-origin:100% 0">1</span>
<span class="ar" style="left:0px;top:77.1px;width:70.8px;text-align:right;font-size:13.4px;transform:scaleX(.94);transform-origin:100% 0">2</span>
<span class="ar" style="left:0px;top:96.1px;width:70.8px;text-align:right;font-size:13.4px;transform:scaleX(.94);transform-origin:100% 0">3</span>
<span class="ar" style="left:74.8px;top:13px;width:86.2px;text-align:center">Temperature</span>
<span class="ar" style="left:74.8px;top:29.5px;width:86.2px;text-align:center">(°C)</span>
<span class="ar" style="left:74.8px;top:58.3px;width:86.2px;text-align:center;font-size:13.4px;transform:scaleX(.94)">326.69</span>
<span class="ar" style="left:74.8px;top:77.1px;width:86.2px;text-align:center;font-size:13.4px;transform:scaleX(.94)">919.68</span>
<span class="ar" style="left:161px;top:13px;width:59.599999999999994px;text-align:center">Pressure</span>
<span class="ar" style="left:161px;top:29.5px;width:59.599999999999994px;text-align:center">(kPa)</span>
<span class="ar" style="left:161px;top:58.3px;width:59.599999999999994px;text-align:center;font-size:13.4px;transform:scaleX(.94)">200.00</span>
<span class="ar" style="left:161px;top:77.1px;width:59.599999999999994px;text-align:center;font-size:13.4px;transform:scaleX(.94)">400.00</span>
<span class="ar" style="left:220.6px;top:13px;width:60.099999999999994px;text-align:center">Density</span>
<span class="ar" style="left:220.6px;top:29.5px;width:60.099999999999994px;text-align:center">(kg/m³)</span>
<span class="ar" style="left:220.6px;top:58.3px;width:60.099999999999994px;text-align:center;font-size:13.4px;transform:scaleX(.94)">1.1607</span>
<span class="ar" style="left:220.6px;top:77.1px;width:60.099999999999994px;text-align:center;font-size:13.4px;transform:scaleX(.94)">1.1670</span>
<span class="ar" style="left:280.7px;top:13px;width:60.19999999999999px;text-align:center">Volume</span>
<span class="ar" style="left:280.7px;top:29.5px;width:60.19999999999999px;text-align:center">(m³/kg)</span>
<span class="ar" style="left:280.7px;top:58.3px;width:60.19999999999999px;text-align:center;font-size:13.4px;transform:scaleX(.94)">0.86155</span>
<span class="ar" style="left:280.7px;top:77.1px;width:60.19999999999999px;text-align:center;font-size:13.4px;transform:scaleX(.94)">0.85690</span>
<span class="ar" style="left:340.9px;top:13px;width:67.90000000000003px;text-align:center">Int. Energy</span>
<span class="ar" style="left:340.9px;top:29.5px;width:67.90000000000003px;text-align:center">(kJ/kg)</span>
<span class="ar" style="left:340.9px;top:58.3px;width:67.90000000000003px;text-align:center;font-size:13.4px;transform:scaleX(.94)">560.30</span>
<span class="ar" style="left:340.9px;top:77.1px;width:67.90000000000003px;text-align:center;font-size:13.4px;transform:scaleX(.94)">1052.6</span>
<span class="ar" style="left:408.8px;top:13px;width:60.0px;text-align:center">Enthalpy</span>
<span class="ar" style="left:408.8px;top:29.5px;width:60.0px;text-align:center">(kJ/kg)</span>
<span class="ar" style="left:408.8px;top:58.3px;width:60.0px;text-align:center;font-size:13.4px;transform:scaleX(.94)">732.60</span>
<span class="ar" style="left:408.8px;top:77.1px;width:60.0px;text-align:center;font-size:13.4px;transform:scaleX(.94)">1395.4</span>
<span class="ar" style="left:468.8px;top:13px;width:62.400000000000034px;text-align:center">Entropy</span>
<span class="ar" style="left:468.8px;top:29.5px;width:62.400000000000034px;text-align:center">(kJ/kg-K)</span>
<span class="ar" style="left:468.8px;top:58.3px;width:62.400000000000034px;text-align:center;font-size:13.4px;transform:scaleX(.94)">4.1953</span>
<span class="ar" style="left:468.8px;top:77.1px;width:62.400000000000034px;text-align:center;font-size:13.4px;transform:scaleX(.94)">4.9701</span>
<div style="left:74.8px;top:0;width:1.4px;height:114px;background:#111"></div>
<div style="left:161px;top:0;width:1.4px;height:114px;background:#111"></div>
<div style="left:220.6px;top:0;width:1.4px;height:114px;background:#111"></div>
<div style="left:280.7px;top:0;width:1.4px;height:114px;background:#111"></div>
<div style="left:340.9px;top:0;width:1.4px;height:114px;background:#111"></div>
<div style="left:408.8px;top:0;width:1.4px;height:114px;background:#111"></div>
<div style="left:468.8px;top:0;width:1.4px;height:114px;background:#111"></div>
<div style="left:531.2px;top:0;width:1.4px;height:114px;background:#111"></div>
<div style="left:0;top:55.8px;width:531.2px;height:1.3px;background:#111"></div>
<div style="left:0;top:74.6px;width:531.2px;height:1.3px;background:#111"></div>
<div style="left:0;top:93.6px;width:531.2px;height:1.3px;background:#111"></div>
<div style="left:0;top:113px;width:531.2px;height:1.3px;background:#111"></div>
<div style="left:0px;top:0;width:1px;height:55.8px;background:#f8f2dc"></div>
<div style="left:75.8px;top:0;width:1px;height:55.8px;background:#f8f2dc"></div>
<div style="left:162px;top:0;width:1px;height:55.8px;background:#f8f2dc"></div>
<div style="left:221.6px;top:0;width:1px;height:55.8px;background:#f8f2dc"></div>
<div style="left:281.7px;top:0;width:1px;height:55.8px;background:#f8f2dc"></div>
<div style="left:341.9px;top:0;width:1px;height:55.8px;background:#f8f2dc"></div>
<div style="left:409.8px;top:0;width:1px;height:55.8px;background:#f8f2dc"></div>
<div style="left:469.8px;top:0;width:1px;height:55.8px;background:#f8f2dc"></div>
<div style="left:221px;top:95px;width:60px;height:19px;border:1px dotted #000;"></div>
<div style="left:0;top:347px;width:498px;height:12px;background:#f5efda"></div>
<div style="left:0;top:347px;width:13px;height:12px;background:#e3daae;border:1px solid;border-color:#fffbe8 #2a2618 #2a2618 #fffbe8"></div>
<svg style="left:3px;top:350px" width="6" height="7"><path d="M5 0V7L1 3.500Z" fill="#000"/></svg>
<div style="left:13px;top:347px;width:12px;height:12px;background:#e3daae;border:1px solid;border-color:#fffbe8 #2a2618 #2a2618 #fffbe8"></div>
<div style="left:485px;top:347px;width:13px;height:12px;background:#e3daae;border:1px solid;border-color:#fffbe8 #2a2618 #2a2618 #fffbe8"></div>
<svg style="left:489px;top:350px" width="6" height="7"><path d="M1 0V7L5 3.500Z" fill="#000"/></svg>
</div>
<div style="left:826px;top:492px;width:498px;height:1px;background:#fbf6e2;"></div>
<div style="left:1324px;top:133px;width:1px;height:360px;background:#fbf6e2;"></div>
<div style="left:811px;top:687px;width:620px;height:1px;background:#2a2618;"></div>
<div style="left:811px;top:688px;width:620px;height:1px;background:#f6f0d8;"></div>
<div style="left:811px;top:688px;width:620px;height:17px;background:#e3daae;"></div>
<div style="left:812px;top:688px;width:1px;height:17px;background:#2a2618;"></div>
<span class="xp" style="left:813.5px;top:690px;font-size:11.5px;transform:scaleX(0.9135);transform-origin:0 0;">Current Fluid: air    Ref. State: User specified</span>
<div style="left:811px;top:705px;width:620px;height:21px;background:#edf0f2;"></div>
<svg style="left:1251px;top:709px" width="16" height="16" viewBox="0 0 16 16"><rect x=".7" y=".7" width="14.600" height="14.600" rx="2" fill="#3a8ee8" stroke="#1a60c0" stroke-width="1.200"/><circle cx="7.500" cy="7" r="4" fill="none" stroke="#fff" stroke-width="1.600"/><path d="M5 13L8 8.500" stroke="#fff" stroke-width="1.600"/></svg>
<svg style="left:1271px;top:709px" width="17" height="17" viewBox="0 0 17 17"><circle cx="8.500" cy="8.500" r="7.500" fill="#ececec" stroke="#c4c4c4" stroke-width="1.200"/><circle cx="8.500" cy="8.500" r="2.200" fill="#fafafa" stroke="#b8b8b8"/></svg>
<svg style="left:1292px;top:708px" width="18" height="18" viewBox="0 0 18 18"><rect x="6" y="1" width="11" height="8" fill="#2a78e0" stroke="#1850b0"/><rect x="1" y="6" width="11" height="8" fill="#4a98f0" stroke="#f4f4f4" stroke-width="1.400"/><rect x="4" y="15" width="5" height="1.500" fill="#888"/></svg>
<svg style="left:1316px;top:708px" width="18" height="18" viewBox="0 0 18 18"><path d="M3 12L10 3L14 7L7 15Z" fill="#5a7ab8"/></svg>
<svg style="left:1338px;top:708px" width="18" height="18" viewBox="0 0 18 18"><rect x="1" y="3" width="14" height="11" fill="#7888a8"/></svg>
<div style="left:1304px;top:746px;width:62px;height:22px;background:#8a8a8a;"></div>
<div style="left:1304px;top:0px;width:62px;height:768px;background:rgba(5,5,0,.885);"></div>
<div style="left:1304px;top:401px;width:62px;height:30px;background:rgba(255,250,225,.2);"></div>
<div style="left:1363px;top:128px;width:3px;height:21px;background:#efdf86;"></div>
<div style="left:1363px;top:158px;width:3px;height:21px;background:#efdf86;"></div>
<div style="left:1363px;top:189px;width:3px;height:21px;background:#efdf86;"></div>
<div style="left:1363px;top:220px;width:3px;height:21px;background:#efdf86;"></div>
<div style="left:1363px;top:251px;width:3px;height:21px;background:#efdf86;"></div>
<div style="left:1363px;top:375px;width:3px;height:21px;background:#efdf86;"></div>
<div style="left:1363px;top:436px;width:3px;height:21px;background:#efdf86;"></div>
<svg style="left:1326.5px;top:7px" width="18" height="17" viewBox="0 0 18 17"><g transform="scale(.94)"><path d="M0 2.600L7 1.500V8H0ZM8 1.350L17.500 0V8H8ZM0 9H7V15.500L0 14.400ZM8 9H17.500V17L8 15.650Z" fill="#fff"/></g></svg>
<svg style="left:1326px;top:36px" width="18" height="18" viewBox="0 0 18 18"><circle cx="9" cy="9" r="6.800" fill="none" stroke="#fff" stroke-width="2"/></svg>
<svg style="left:1325px;top:68px" width="20" height="13" viewBox="0 0 20 13"><rect x="4.700" y=".7" width="10.600" height="11.600" fill="none" stroke="#fff" stroke-width="1.400"/><path d="M2.500 2.500H.7V10.500H2.500M17.500 2.500H19.300V10.500H17.500" fill="none" stroke="#fff" stroke-width="1.400"/></svg>
<svg style="left:1326px;top:99px" width="18" height="16" viewBox="0 0 18 16"><path d="M1 2.500H7L8.500 4.500H17V14H1Z" fill="#f4d264"/><path d="M1 6H17V14.500H1Z" fill="#fbe58c"/><path d="M5 9H13V15H11V12H7V15H5Z" fill="#3fa9f0"/></svg>
<svg style="left:1312px;top:130px" width="15" height="15" viewBox="0 0 15 15"><path d="M0 0H13L15 2V15H0Z" fill="#2a50d8"/><rect x="3" y="0" width="8" height="4.500" fill="#dfe6ff"/><rect x="8" y=".5" width="2" height="3.200" fill="#2a50d8"/><rect x="2" y="7" width="11" height="7" fill="#fff"/><rect x="2" y="8.500" width="11" height="2" fill="#e02828"/><rect x="2" y="12" width="11" height="1.500" fill="#e02828"/></svg>
<span class="tb" style="left:1332px;top:131px;">Tot...</span>
<svg style="left:1312px;top:161px" width="16" height="16" viewBox="0 0 16 16"><circle cx="8" cy="8" r="7.800" fill="#e8402c"/><path d="M8 8L1.200 4.200A7.800 7.800 0 0 0 7.500 15.800L11.300 9.500Z" fill="#2aa84a"/><path d="M8 8L11.500 9.800L7.600 15.800A7.800 7.800 0 0 0 15 4.500H8Z" fill="#f8c82a"/><circle cx="8" cy="8" r="3.600" fill="#fff"/><circle cx="8" cy="8" r="2.800" fill="#3a80f0"/></svg>
<span class="tb" style="left:1332px;top:162px;">Do...</span>
<span style="left:1311px;top:186px;font:bold 25px 'Liberation Sans',sans-serif;line-height:26px;color:#1a78d8;">e</span>
<span class="tb" style="left:1332px;top:193px;">Err...</span>
<svg style="left:1312px;top:223px" width="16" height="16" viewBox="0 0 16 16"><rect width="16" height="16" fill="#d8d4c0"/><path d="M1 2C3.500 .5 5.500 1 7.500 2V7.500C5.500 6.500 3.500 6.300 1 7.500Z" fill="#e85a28"/><path d="M8.500 2C10.500 3 12.500 3 15 1.500V7C12.500 8.500 10.500 8.500 8.500 7.500Z" fill="#58b838"/><path d="M1 8.500C3.500 7.300 5.500 7.500 7.500 8.500V14C5.500 13 3.500 12.800 1 14Z" fill="#3890e8"/><path d="M8.500 8.500C10.500 9.500 12.500 9.500 15 8V13.500C12.500 15 10.500 15 8.500 14Z" fill="#f0c030"/><rect x="6.500" y="8.500" width="9" height="6" fill="#f4f0e4"/></svg>
<span style="left:1319px;top:232px;font:bold 6px 'Liberation Sans',sans-serif;line-height:7px;color:#c02020;">XP</span>
<span class="tb" style="left:1332px;top:224px;">Wi...</span>
<svg style="left:1312px;top:254px" width="17" height="16" viewBox="0 0 17 16"><rect x="8" y="1.500" width="8.500" height="13" fill="#fff" stroke="#80389c" stroke-width="1"/><path d="M13 4H16.500M13 7H16.500M13 10H16.500" stroke="#80389c" stroke-width="1.600"/><path d="M0 1.800L10.500 0V16L0 14.200Z" fill="#80389c"/></svg>
<span style="left:1314.5px;top:255px;font:bold 11px 'Liberation Sans',sans-serif;line-height:14px;color:#fff;">N</span>
<span class="tb" style="left:1332px;top:254px;">M...</span>
<svg style="left:1327px;top:285px" width="17" height="16" viewBox="0 0 17 16"><rect x="8" y="1.500" width="8.500" height="13" fill="#fff" stroke="#1f7245" stroke-width="1"/><path d="M11.500 4H16M11.500 6.500H16M11.500 9H16M11.500 11.500H16" stroke="#1f7245" stroke-width="1.300"/><path d="M0 1.800L10.500 0V16L0 14.200Z" fill="#1f7245"/></svg>
<span style="left:1329px;top:286px;font:bold 11px 'Liberation Sans',sans-serif;line-height:14px;color:#fff;">X</span>
<svg style="left:1327px;top:316px" width="17" height="16" viewBox="0 0 17 16"><rect x="8" y="1.500" width="8.500" height="13" fill="#fff" stroke="#2a5699" stroke-width="1"/><path d="M11.500 4H16M11.500 6.500H16M11.500 9H16M11.500 11.500H16" stroke="#2a5699" stroke-width="1.300"/><path d="M0 1.800L10.500 0V16L0 14.200Z" fill="#2a5699"/></svg>
<span style="left:1328px;top:317px;font:bold 11px 'Liberation Sans',sans-serif;line-height:14px;color:#fff;font-size:9.500px;">W</span>
<svg style="left:1327px;top:347px" width="17" height="16" viewBox="0 0 17 16"><rect x="8" y="1.500" width="8.500" height="13" fill="#fff" stroke="#d24625" stroke-width="1"/><path d="M11.500 4H16M11.500 6.500H16M11.500 9H16M11.500 11.500H16" stroke="#d24625" stroke-width="1.300"/><path d="M0 1.800L10.500 0V16L0 14.200Z" fill="#d24625"/></svg>
<span style="left:1329px;top:348px;font:bold 11px 'Liberation Sans',sans-serif;line-height:14px;color:#fff;">P</span>
<div style="left:1312px;top:379px;width:16px;height:15px;border-radius:50%;background:radial-gradient(circle at 40% 35%,#ffffff 0%,#e4e4e4 55%,#8f8f8f 100%);"></div>
<span style="left:1315px;top:377px;font:bold 15px 'Liberation Sans',sans-serif;line-height:18px;color:#111;">S</span>
<span class="tb" style="left:1332px;top:378px;">SM...</span>
<div style="left:1312px;top:409px;width:16px;height:15px;border-radius:50%;background:radial-gradient(circle at 40% 35%,#ffffff 0%,#e4e4e4 55%,#8f8f8f 100%);"></div>
<span style="left:1315px;top:407px;font:bold 15px 'Liberation Sans',sans-serif;line-height:18px;color:#111;">S</span>
<span class="tb" style="left:1332px;top:408px;color:#26261e;">SM...</span>
<svg style="left:1312px;top:439px" width="17" height="17" viewBox="0 0 17 17"><rect width="17" height="17" fill="#f4f4f4"/><path d="M8 2L9.500 5.500L13 3L11.500 7L15.500 8L12 10L14 14L10 12L8.500 16L7 12L3 14.500L5 10L1 9L5 7L3 3L7 5.500Z" fill="#f01010"/></svg>
<span class="tb" style="left:1332px;top:440px;">Cli...</span>
<svg style="left:1320px;top:615px" width="10" height="14" viewBox="0 0 10 14"><path d="M8 1.500L2 7L8 12.500" fill="none" stroke="#fff" stroke-width="1.600"/></svg>
<svg style="left:1316px;top:648px" width="18" height="13" viewBox="0 0 18 13"><rect x="4.700" y="2.700" width="11" height="7.600" fill="none" stroke="#fff" stroke-width="1.400"/><rect x="16" y="5" width="1.500" height="3" fill="#fff"/><path d="M2.500 1V3.500M4.500 1V3.500M1.500 3.500H5.500V6C5.500 8 1.500 8 1.500 6ZM3.500 7.500V11" stroke="#fff" stroke-width="1.100" fill="#fff"/></svg>
<svg style="left:1327px;top:680px" width="18" height="17" viewBox="0 0 18 17"><rect x="0" y="0" width="15.500" height="12.500" fill="#fff"/><path d="M2.500 3H13M2.500 5.800H13M2.500 8.600H8" stroke="#222" stroke-width="1.300"/><circle cx="12.500" cy="11.500" r="4" fill="#1c1c12" stroke="#fff" stroke-width="1.400"/><path d="M10.500 11.500H14.500" stroke="#fff" stroke-width="1.400"/></svg>
<span class="ui" style="left:1320.5px;top:717px;font-size:12px;transform:scaleX(0.9325);transform-origin:0 0;color:#fff;">22:03</span>
<span class="ui" style="left:1306px;top:734px;color:#fff;font-size:12px;letter-spacing:-0.2px">28/05/2016</span>
<div style="left:1304px;top:764px;width:62px;height:1px;background:#b8b8b8;"></div>
</body></html>
